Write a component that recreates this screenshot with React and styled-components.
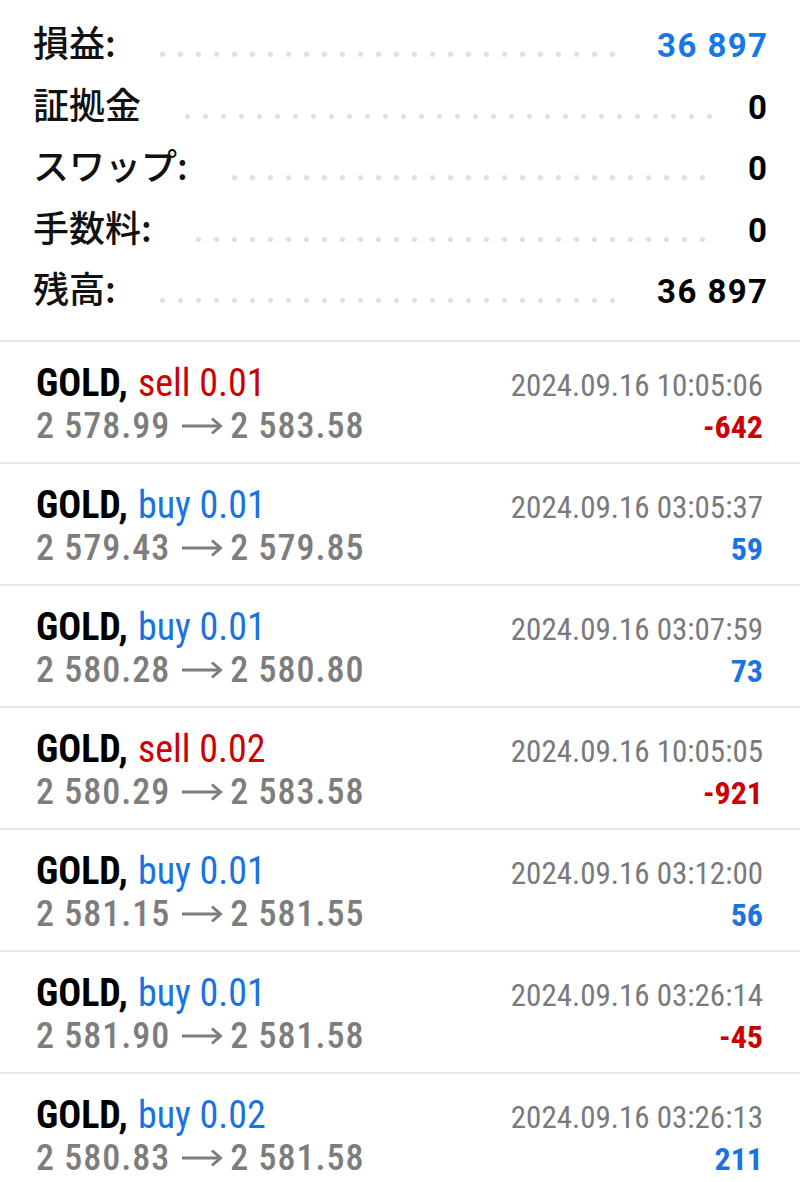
import React from 'react';
import styled, { createGlobalStyle } from 'styled-components';

const GlobalStyle = createGlobalStyle`
  html, body {
    margin: 0;
    padding: 0;
    background: #ffffff;
  }
  body {
    font-family: Roboto, "Noto Sans CJK JP", sans-serif;
    color: #000;
  }
`;

const Page = styled.div`
  width: 800px;
  overflow: hidden;
`;

const Summary = styled.div`
  padding: 11px 33px 21px 33px;
  border-bottom: 2px solid #e6e6e6;
`;

const SummaryRow = styled.div`
  display: flex;
  align-items: baseline;
  height: 61.5px;
  line-height: 61.5px;
`;

const Label = styled.div`
  font-family: "Noto Sans CJK JP", sans-serif;
  font-size: 36px;
  font-weight: 500;
  color: #111;
  white-space: nowrap;
`;

const Dots = styled.div`
  flex: 1;
  height: 5px;
  margin: 0 34px 0 44px;
  background-image: radial-gradient(circle at 2.5px 2.5px, #e0e0e0 2.2px, transparent 2.7px);
  background-size: 18px 5px;
  background-repeat: repeat-x;
`;

const Value = styled.div`
  font-family: Roboto, sans-serif;
  font-size: 33px;
  font-weight: 700;
  letter-spacing: 1.4px;
  margin-right: -1.4px;
  color: ${(p) => (p.$blue ? '#1877e6' : '#000')};
  white-space: nowrap;
`;

const Trade = styled.div`
  padding: 20px 37px 14px 36px;
  border-bottom: 2px solid #e6e6e6;
  font-family: "Roboto Condensed", Roboto, sans-serif;
  font-stretch: condensed;
`;

const Line = styled.div`
  display: flex;
  justify-content: space-between;
  align-items: baseline;
  height: 43px;
  line-height: 43px;
  white-space: nowrap;
`;

const Symbol = styled.span`
  font-size: 38px;
  font-weight: 700;
  color: #000;
`;

const Side = styled.span`
  margin-left: 10px;
  font-size: 38px;
  font-weight: 400;
  color: ${(p) => (p.$type === 'sell' ? '#cc0000' : '#1a73e0')};
`;

const Time = styled.span`
  font-size: 31px;
  font-weight: 400;
  color: #7a7a7a;
`;

const Prices = styled.span`
  display: inline-flex;
  align-items: baseline;
  font-size: 36px;
  font-weight: 500;
  letter-spacing: 1px;
  color: #7d7d7d;
`;

const Arrow = styled.svg`
  width: 42px;
  height: 18px;
  margin: 0 7px 0 11px;
  align-self: center;
  flex-shrink: 0;
`;

const Profit = styled.span`
  font-size: 32px;
  font-weight: 700;
  color: ${(p) => (p.$neg ? '#cc0000' : '#1a73e0')};
`;

const summary = [
  { label: '損益:', value: '36 897', blue: true },
  { label: '証拠金', value: '0' },
  { label: 'スワップ:', value: '0' },
  { label: '手数料:', value: '0' },
  { label: '残高:', value: '36 897' },
];

const trades = [
  { type: 'sell', lot: '0.01', open: '2 578.99', close: '2 583.58', time: '2024.09.16 10:05:06', profit: '-642' },
  { type: 'buy', lot: '0.01', open: '2 579.43', close: '2 579.85', time: '2024.09.16 03:05:37', profit: '59' },
  { type: 'buy', lot: '0.01', open: '2 580.28', close: '2 580.80', time: '2024.09.16 03:07:59', profit: '73' },
  { type: 'sell', lot: '0.02', open: '2 580.29', close: '2 583.58', time: '2024.09.16 10:05:05', profit: '-921' },
  { type: 'buy', lot: '0.01', open: '2 581.15', close: '2 581.55', time: '2024.09.16 03:12:00', profit: '56' },
  { type: 'buy', lot: '0.01', open: '2 581.90', close: '2 581.58', time: '2024.09.16 03:26:14', profit: '-45' },
  { type: 'buy', lot: '0.02', open: '2 580.83', close: '2 581.58', time: '2024.09.16 03:26:13', profit: '211' },
];

function ArrowIcon() {
  return (
    <Arrow viewBox="0 0 42 18" fill="none" stroke="#7d7d7d" strokeWidth="3">
      <path d="M1 9H39" />
      <path d="M31 1.5L39.5 9L31 16.5" strokeLinejoin="miter" />
    </Arrow>
  );
}

export default function App() {
  return (
    <Page>
      <GlobalStyle />
      <Summary>
        {summary.map((row, i) => (
          <SummaryRow key={i}>
            <Label>{row.label}</Label>
            <Dots />
            <Value $blue={row.blue}>{row.value}</Value>
          </SummaryRow>
        ))}
      </Summary>
      {trades.map((t, i) => (
        <Trade key={i}>
          <Line>
            <span>
              <Symbol>GOLD,</Symbol>
              <Side $type={t.type}>{t.type} {t.lot}</Side>
            </span>
            <Time>{t.time}</Time>
          </Line>
          <Line>
            <Prices>
              <span>{t.open}</span>
              <ArrowIcon />
              <span>{t.close}</span>
            </Prices>
            <Profit $neg={t.profit.startsWith('-')}>{t.profit}</Profit>
          </Line>
        </Trade>
      ))}
    </Page>
  );
}
